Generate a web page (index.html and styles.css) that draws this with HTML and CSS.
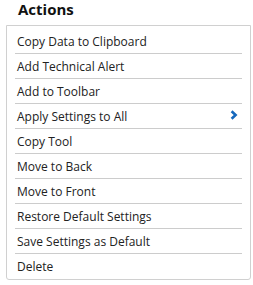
FILE: index.html
```html
<!DOCTYPE html>
<html lang="en">

<head>
    <meta charset="UTF-8" />
    <meta name="viewport" content="width=device-width, initial-scale=1.0" />
    <title>Actions</title>
    <link rel="stylesheet" href="styles.css">
</head>

<body>

    <div class="panel">
        <h3 class="panel-title">Actions</h3>

        <!-- action menu -->
        <ul class="menu">
            <li class="menu-item">Copy Data to Clipboard</li>
            <li class="menu-item">Add Technical Alert</li>
            <li class="menu-item">Add to Toolbar</li>
            <li class="menu-item has-sub">
                <span>Apply Settings to All</span>
                <svg class="chevron" width="8" height="10" viewBox="0 0 8 10">
                    <path d="M1.6 1.2 L5.6 5 L1.6 8.8" fill="none" stroke="#1668bd" stroke-width="2.6" />
                </svg>
            </li>
            <li class="menu-item">Copy Tool</li>
            <li class="menu-item">Move to Back</li>
            <li class="menu-item">Move to Front</li>
            <li class="menu-item">Restore Default Settings</li>
            <li class="menu-item">Save Settings as Default</li>
            <li class="menu-item">Delete</li>
        </ul>
    </div>

</body>

</html>
```

FILE: styles.css
```css
body {
    margin: 0;
    font-family: 'Open Sans', sans-serif;
    background: #ffffff;
    color: #222222;
}

.panel {
    padding: 0 2px 0 6px;
}

.panel-title {
    margin: 0;
    padding: 0 0 0 12px;
    height: 25px;
    line-height: 18px;
    font-size: 15px;
    font-weight: bold;
    color: #111111;
}

.menu {
    list-style: none;
    margin: 0;
    padding: 3px 8px 1px 8px;
    border: 1px solid #d0d0d0;
    border-radius: 0 0 3px 3px;
}

.menu-item {
    display: flex;
    justify-content: space-between;
    align-items: center;
    height: 24px;
    padding: 0 0 0 2px;
    font-size: 12px;
    border-bottom: 1px solid #cccccc;
    cursor: pointer;
}

.menu-item:last-child {
    border-bottom: none;
}

.chevron {
    margin: 0 4px 2px 0;
}
```
